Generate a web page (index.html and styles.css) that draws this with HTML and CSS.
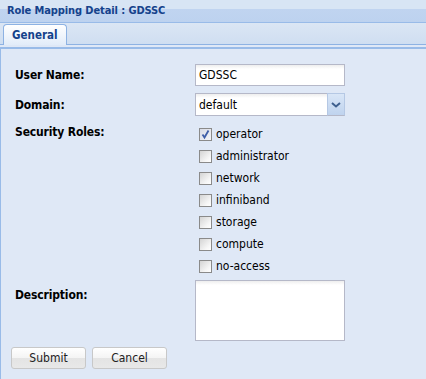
FILE: index.html
```html
<!DOCTYPE html>
<html lang="en">
<head>
  <meta charset="UTF-8" />
  <title>Role Mapping Detail</title>
  <link rel="stylesheet" href="styles.css">
</head>
<body>
  <div class="panel">
    <div class="panel-header">Role Mapping Detail : GDSSC</div>

    <div class="tab-strip">
      <div class="tab active">General</div>
    </div>
    <div class="tab-spacer"></div>

    <!-- Form body -->
    <form class="panel-body" id="roleForm">
      <div class="form-row">
        <label class="field-label" for="userName">User Name:</label>
        <input class="text-field" type="text" id="userName" value="GDSSC" />
      </div>

      <div class="form-row">
        <label class="field-label" for="domain">Domain:</label>
        <div class="combo">
          <input class="combo-input" type="text" id="domain" value="default" readonly />
          <span class="combo-trigger">
            <svg width="10" height="6" viewBox="0 0 10 6"><path d="M1 1 L5 4.5 L9 1" fill="none" stroke="#3e5f8e" stroke-width="2"/></svg>
          </span>
        </div>
      </div>

      <div class="form-row">
        <span class="field-label roles-label">Security Roles:</span>
        <div class="check-group">
          <label class="check-item"><span class="check-box checked"><svg width="11" height="11" viewBox="0 0 11 11"><path d="M2.5 5.5 L4.5 8.5 L8.5 1.5" fill="none" stroke="#3f5ea8" stroke-width="1.8"/></svg></span>operator</label>
          <label class="check-item"><span class="check-box"></span>administrator</label>
          <label class="check-item"><span class="check-box"></span>network</label>
          <label class="check-item"><span class="check-box"></span>infiniband</label>
          <label class="check-item"><span class="check-box"></span>storage</label>
          <label class="check-item"><span class="check-box"></span>compute</label>
          <label class="check-item"><span class="check-box"></span>no-access</label>
        </div>
      </div>

      <div class="form-row desc-row">
        <label class="field-label desc-label" for="description">Description:</label>
        <textarea class="text-area" id="description"></textarea>
      </div>

      <div class="button-bar">
        <button type="submit" class="btn">Submit</button>
        <button type="button" class="btn">Cancel</button>
      </div>
    </form>
  </div>
</body>
</html>
```

FILE: styles.css
```css
body {
  margin: 0;
  font-family: "DejaVu Sans Condensed", "DejaVu Sans", sans-serif;
  font-size: 12px;
  background-color: #dfe8f6;
}
.panel {
  width: 426px;
  height: 379px;
  overflow: hidden;
}
/* Header */
.panel-header {
  height: 22px;
  line-height: 21px;
  padding-left: 7px;
  border-bottom: 1px solid #99bbe8;
  background: linear-gradient(#d8e5f4 0, #d8e5f4 9px, #c0d4f0 9px, #bdd2ef 22px);
  color: #15428b;
  font-weight: bold;
  font-size: 11px;
  letter-spacing: -0.1px;
}
/* Tabs */
.tab-strip {
  height: 20px;
  padding: 1px 0 0 3px;
  border-bottom: 1px solid #8db2e3;
  background: linear-gradient(#dbe6f4, #cfdef1);
  display: flex;
  align-items: flex-end;
}
.tab {
  height: 19px;
  padding: 0 8px 0 8px;
  border: 1px solid #8db2e3;
  border-bottom: none;
  border-radius: 4px 4px 0 0;
  line-height: 20px;
  color: #15428b;
  font-weight: bold;
  font-size: 11.5px;
}
.tab.active {
  background: linear-gradient(#ffffff, #e2ecf9);
  margin-bottom: -1px;
  height: 20px;
}
.tab-spacer {
  height: 2px;
  background-color: #dfe8f6;
  border-bottom: 2px solid #99bbe8;
}
.panel-body {
  margin: 0;
  height: 322px;
  padding: 15px 0 0 14px;
  border-left: 1px solid #99bbe8;
  border-bottom: 4px solid #99bbe8;
  display: flex;
  flex-direction: column;
  gap: 7px;
}
.form-row {
  display: grid;
  grid-template-columns: 180px 150px;
  align-items: center;
}
.field-label {
  font-weight: bold;
  color: #000;
  letter-spacing: -0.15px;
}
.text-field,
.combo-input,
.text-area {
  box-sizing: border-box;
  border: 1px solid #b5b8c8;
  background: #fff linear-gradient(#eeeeee, #ffffff 4px);
  font-family: inherit;
  font-size: 12px;
  color: #000;
  margin: 0;
  outline: none;
}
.text-field {
  width: 150px;
  height: 22px;
  padding: 0 3px;
}
.combo {
  display: flex;
  width: 150px;
  height: 23px;
}
.combo-input {
  width: 132px;
  height: 23px;
  padding: 0 3px;
  border-right: none;
}
.combo-trigger {
  box-sizing: border-box;
  width: 18px;
  height: 23px;
  border: 1px solid #b5c8e4;
  border-bottom-color: #b5b8c8;
  background: linear-gradient(#d9e6f7, #bfd3ee);
  display: flex;
  align-items: center;
  justify-content: center;
}
.roles-label {
  align-self: start;
  line-height: 18px;
}
.check-group {
  display: flex;
  flex-direction: column;
}
.check-item {
  height: 22px;
  display: flex;
  align-items: center;
  padding-left: 4px;
  color: #000;
}
.check-box {
  box-sizing: border-box;
  width: 13px;
  height: 13px;
  margin-right: 4px;
  border: 1px solid #8a8a8a;
  background: linear-gradient(135deg, #d4d4d4, #f6f6f6 70%, #ffffff);
  display: flex;
  align-items: center;
  justify-content: center;
}
.check-box.checked {
  background: linear-gradient(135deg, #d8dbe6, #f3f4f8);
}
.desc-row {
  margin-top: -4px;
}
.desc-label {
  align-self: start;
  padding-top: 8px;
}
.text-area {
  width: 150px;
  height: 61px;
  resize: none;
  padding: 2px 3px;
}
.button-bar {
  display: flex;
  gap: 6px;
  margin: -1px 0 0 -4px;
}
.btn {
  width: 75px;
  height: 22px;
  border: 1px solid #c8c8c8;
  border-radius: 3px;
  background: linear-gradient(#ffffff 0, #f4f4f4 50%, #e4e4e4 51%, #e8e8e8 100%);
  font-family: inherit;
  font-size: 12px;
  color: #222;
  padding: 0;
}
```
